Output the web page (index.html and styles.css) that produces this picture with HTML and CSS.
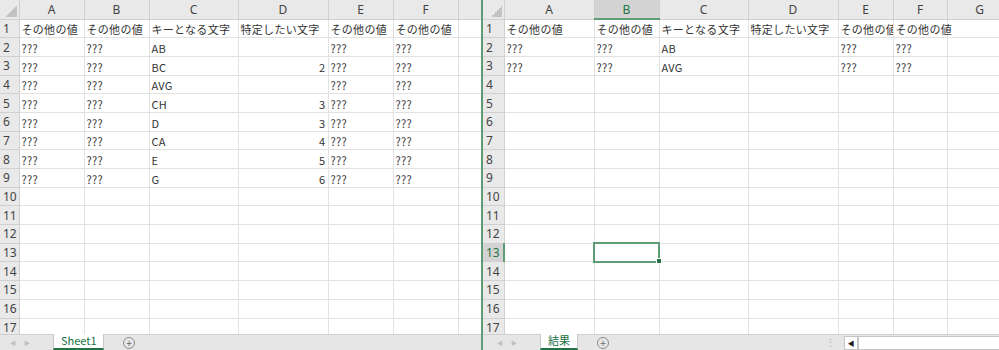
FILE: index.html
```html
<!DOCTYPE html>
<html lang="ja">
<head>
    <meta charset="UTF-8">
    <title>Excel</title>
    <link rel="stylesheet" href="styles.css">
</head>
<body>
<div class="window">
    <!-- left workbook -->
    <div class="pane left">
        <div class="grid">
            <table class="sheet sheet-left">
                <colgroup>
                    <col style="width:19px"><col style="width:65px"><col style="width:65px"><col style="width:89px">
                    <col style="width:90px"><col style="width:65px"><col style="width:65px"><col style="width:65px">
                </colgroup>
                <tr class="colhead"><th class="corner"></th><th>A</th><th>B</th><th>C</th><th>D</th><th>E</th><th>F</th><th></th></tr>
                <tr><th>1</th><td>その他の値</td><td>その他の値</td><td>キーとなる文字</td><td>特定したい文字</td><td>その他の値</td><td>その他の値</td><td></td></tr>
                <tr><th>2</th><td>???</td><td>???</td><td>AB</td><td class="num"></td><td>???</td><td>???</td><td></td></tr>
                <tr><th>3</th><td>???</td><td>???</td><td>BC</td><td class="num">2</td><td>???</td><td>???</td><td></td></tr>
                <tr><th>4</th><td>???</td><td>???</td><td>AVG</td><td class="num"></td><td>???</td><td>???</td><td></td></tr>
                <tr><th>5</th><td>???</td><td>???</td><td>CH</td><td class="num">3</td><td>???</td><td>???</td><td></td></tr>
                <tr><th>6</th><td>???</td><td>???</td><td>D</td><td class="num">3</td><td>???</td><td>???</td><td></td></tr>
                <tr><th>7</th><td>???</td><td>???</td><td>CA</td><td class="num">4</td><td>???</td><td>???</td><td></td></tr>
                <tr><th>8</th><td>???</td><td>???</td><td>E</td><td class="num">5</td><td>???</td><td>???</td><td></td></tr>
                <tr><th>9</th><td>???</td><td>???</td><td>G</td><td class="num">6</td><td>???</td><td>???</td><td></td></tr>
                <tr><th>10</th><td></td><td></td><td></td><td></td><td></td><td></td><td></td></tr>
                <tr><th>11</th><td></td><td></td><td></td><td></td><td></td><td></td><td></td></tr>
                <tr><th>12</th><td></td><td></td><td></td><td></td><td></td><td></td><td></td></tr>
                <tr><th>13</th><td></td><td></td><td></td><td></td><td></td><td></td><td></td></tr>
                <tr><th>14</th><td></td><td></td><td></td><td></td><td></td><td></td><td></td></tr>
                <tr><th>15</th><td></td><td></td><td></td><td></td><td></td><td></td><td></td></tr>
                <tr><th>16</th><td></td><td></td><td></td><td></td><td></td><td></td><td></td></tr>
                <tr><th>17</th><td></td><td></td><td></td><td></td><td></td><td></td><td></td></tr>
            </table>
        </div>
        <div class="tabbar">
            <div class="nav"><span>&#9664;</span><span>&#9654;</span></div>
            <div class="tab">Sheet1</div>
            <div class="add">+</div>
        </div>
    </div>

    <div class="divider"></div>

    <!-- right workbook -->
    <div class="pane right">
        <div class="grid">
            <table class="sheet sheet-right">
                <colgroup>
                    <col style="width:21px"><col style="width:90px"><col style="width:65px"><col style="width:89px">
                    <col style="width:90px"><col style="width:55px"><col style="width:54px"><col style="width:65px">
                </colgroup>
                <tr class="colhead"><th class="corner"></th><th>A</th><th class="active-col">B</th><th>C</th><th>D</th><th>E</th><th>F</th><th>G</th></tr>
                <tr><th>1</th><td>その他の値</td><td>その他の値</td><td>キーとなる文字</td><td>特定したい文字</td><td>その他の値</td><td class="spill">その他の値</td><td></td></tr>
                <tr><th>2</th><td>???</td><td>???</td><td>AB</td><td></td><td>???</td><td>???</td><td></td></tr>
                <tr><th>3</th><td>???</td><td>???</td><td>AVG</td><td></td><td>???</td><td>???</td><td></td></tr>
                <tr><th>4</th><td></td><td></td><td></td><td></td><td></td><td></td><td></td></tr>
                <tr><th>5</th><td></td><td></td><td></td><td></td><td></td><td></td><td></td></tr>
                <tr><th>6</th><td></td><td></td><td></td><td></td><td></td><td></td><td></td></tr>
                <tr><th>7</th><td></td><td></td><td></td><td></td><td></td><td></td><td></td></tr>
                <tr><th>8</th><td></td><td></td><td></td><td></td><td></td><td></td><td></td></tr>
                <tr><th>9</th><td></td><td></td><td></td><td></td><td></td><td></td><td></td></tr>
                <tr><th>10</th><td></td><td></td><td></td><td></td><td></td><td></td><td></td></tr>
                <tr><th>11</th><td></td><td></td><td></td><td></td><td></td><td></td><td></td></tr>
                <tr><th>12</th><td></td><td></td><td></td><td></td><td></td><td></td><td></td></tr>
                <tr><th class="active-row">13</th><td></td><td class="selected"></td><td></td><td></td><td></td><td></td><td></td></tr>
                <tr><th>14</th><td></td><td></td><td></td><td></td><td></td><td></td><td></td></tr>
                <tr><th>15</th><td></td><td></td><td></td><td></td><td></td><td></td><td></td></tr>
                <tr><th>16</th><td></td><td></td><td></td><td></td><td></td><td></td><td></td></tr>
                <tr><th>17</th><td></td><td></td><td></td><td></td><td></td><td></td><td></td></tr>
            </table>
        </div>
        <div class="tabbar">
            <div class="nav"><span>&#9664;</span><span>&#9654;</span></div>
            <div class="tab">結果</div>
            <div class="add">+</div>
            <div class="spacer"></div>
            <div class="grip">&#8942;</div>
            <div class="hscroll"><div class="hbtn">&#9664;</div></div>
        </div>
    </div>
</div>
</body>
</html>
```

FILE: styles.css
```css
body {
    margin: 0;
    font-family: "Noto Sans CJK JP", "Noto Sans", sans-serif;
    background: #ffffff;
    color: #333333;
}
.window {
    display: flex;
    width: 999px;
    height: 350px;
    overflow: hidden;
}
.pane {
    display: flex;
    flex-direction: column;
    overflow: hidden;
}
.left {
    width: 481px;
    flex: none;
}
.right {
    flex: 1;
}
.divider {
    width: 2px;
    flex: none;
    background: #5e9c74;
}
.grid {
    height: 334px;
    overflow: hidden;
}
.sheet {
    border-collapse: collapse;
    table-layout: fixed;
}
.sheet-left {
    width: 523px;
}
.sheet-right {
    width: 529px;
}
.sheet tr {
    height: 18.7px;
}
.sheet tr.colhead {
    height: 19px;
}
.sheet th {
    background: #e9e9e9;
    color: #444444;
    font-weight: normal;
    font-family: "Noto Sans", "Noto Sans CJK JP", sans-serif;
    font-size: 12px;
    padding: 0;
    border: 1px solid #d0d0d0;
    border-top: none;
    border-left: none;
    overflow: hidden;
    white-space: nowrap;
    text-align: center;
}
.sheet tr:not(.colhead) th {
    text-align: left;
    padding-left: 3px;
}
.sheet th.corner {
    background: #e9e9e9 linear-gradient(135deg, transparent 50%, #c2c2c2 50%) no-repeat right 2px bottom 2px / 11px 11px;
}
.sheet td {
    padding: 0 2px;
    border-right: 1px solid #e2e2e2;
    border-bottom: 1px solid #e2e2e2;
    font-size: 11px;
    letter-spacing: 0.3px;
    white-space: nowrap;
    overflow: hidden;
    line-height: 14px;
    vertical-align: bottom;
    padding-bottom: 1px;
}
.sheet td.num {
    text-align: right;
}
.sheet td.spill {
    overflow: visible;
}
.sheet th.active-col {
    background: #d3d3d3;
    color: #217346;
    border-bottom: 2px solid #5e9c74;
}
.sheet th.active-row {
    background: #d3d3d3;
    color: #217346;
    border-right: 2px solid #5e9c74;
}
.sheet td.selected {
    position: relative;
    overflow: visible;
    outline: 2px solid #5e9c74;
    outline-offset: -1px;
}
.sheet td.selected::after {
    content: "";
    position: absolute;
    right: -3px;
    bottom: -3px;
    width: 4px;
    height: 4px;
    background: #217346;
    border: 1px solid #ffffff;
}
.tabbar {
    flex: none;
    display: flex;
    align-items: stretch;
    background: #e6e6e6;
    border-top: 1px solid #cfcfcf;
    box-sizing: border-box;
    height: 16px;
}
.nav {
    width: 53px;
    display: flex;
    gap: 8px;
    padding-left: 10px;
    align-items: center;
    font-size: 6px;
    color: #c0c0c0;
    box-sizing: border-box;
}
.right .nav {
    width: 57px;
    padding-left: 14px;
}
.tab {
    background: #ffffff;
    color: #217346;
    font-size: 11px;
    line-height: 13px;
    padding: 0 7px;
    border-left: 1px solid #c6c6c6;
    border-right: 1px solid #c6c6c6;
    border-bottom: 2px solid #217346;
    margin-top: -1px;
}
.left .tab {
    width: 51px;
    box-sizing: border-box;
    text-align: center;
}
.add {
    width: 10px;
    height: 10px;
    margin: 2px 0 0 19px;
    border: 1px solid #8c8c8c;
    border-radius: 50%;
    font-size: 10px;
    line-height: 10px;
    text-align: center;
    color: #666666;
}
.spacer {
    flex: 1;
}
.grip {
    color: #a8a8a8;
    font-size: 11px;
    line-height: 14px;
    padding-right: 8px;
}
.hscroll {
    width: 154px;
    background: #ffffff;
    border: 1px solid #c6c6c6;
    border-right: none;
    margin: 1px 0 0;
    display: flex;
}
.hbtn {
    width: 12px;
    border-right: 2px solid #c6c6c6;
    font-size: 7px;
    line-height: 13px;
    text-align: center;
    color: #222222;
}
```
